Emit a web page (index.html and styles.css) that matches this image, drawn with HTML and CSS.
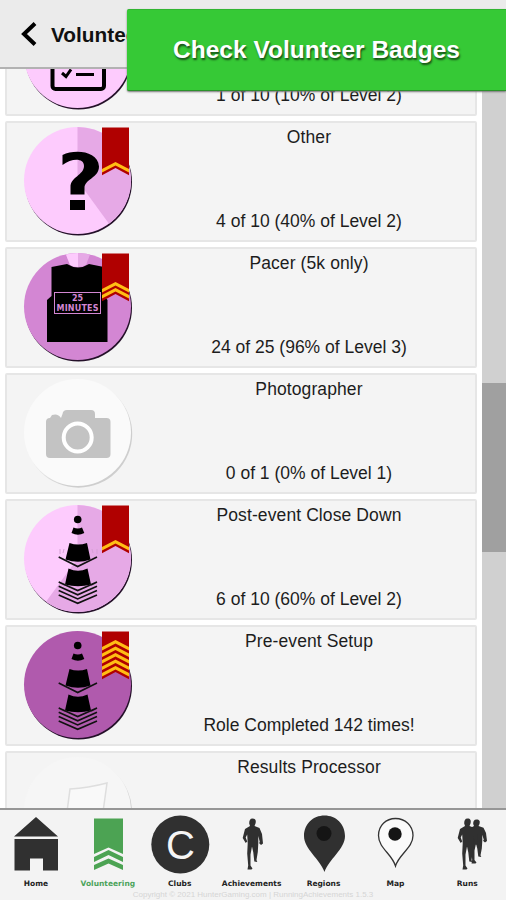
FILE: index.html
```html
<!DOCTYPE html>
<html lang="en">
<head>
<meta charset="utf-8">
<title>Volunteering</title>
<link rel="stylesheet" href="styles.css">
</head>
<body>
<svg class="defs" aria-hidden="true">
  <defs>
    <g id="cones">
      <circle cx="77.7" cy="19.5" r="3.8"/>
      <path d="M73.500 27.500Q78 29.500 82 27.500L84.300 33Q78 36.500 71.500 33Z"/>
      <path d="M69.500 43Q78 46 87 43L90.500 59.500Q78 64 65.500 59.500ZM68.500 68.500Q78 73 87.500 68.500L91 84.500Q78 88 65 84.500Z"/>
      <path class="line" d="M58.700 57L77.700 66.500 97 57M58.700 82L65 85M91 85L97 82M58.700 82L77.700 90.500 97 82M58.700 86.300L77.700 94.800 97 86.300M58.700 90.600L77.700 99 97 90.600M58.700 95L77.700 103.300 97 95"/>
    </g>
    <path id="ribbon" d="M102 5.500H129V53.200L115.500 46 102 53.200Z"/>
    <path id="stripe" d="M102 47L115.500 40 129 47V50.600L115.500 43.600 102 50.600Z"/>
    <path id="runner" d="M10.500 0c3 0 3.800 2 3 5l-1 2.500 5 2 2.500 6 1 9.500-2 1.500-2-2 .8-1-1.500-6v7l-.5 9-1.300 8 .8 2-3-.5-1-9-1.300-6-1.500 8 0 11 2 3-1 1-4 0 .7-4-1-12 .5-10-.5-9-1.500 3 1.500 4-1.500 1.500-3-5 2.300-9 5-3-.8-2.500c0-3 .8-5 3.300-5Z"/>
  </defs>
</svg>
<div class="app">
  <header class="header">
    <svg class="back" viewBox="0 0 18 26"><path d="M15 2.500L4 13 15 23.500"/></svg>
    <h1>Volunteering</h1>
  </header>
  <div class="toast">Check Volunteer Badges</div>
  <main class="content">
    <section class="list">
      <article class="card">
        <svg class="badge" viewBox="7 1 136 118"><circle class="shade" cx="78.500" cy="60" r="53.500"/><circle class="pink" cx="77.500" cy="58.500" r="53.500"/><rect class="outline" x="52.500" y="30" width="51.500" height="63" rx="3"/><path class="check" d="M62 77l4 3.500 5-7M76 78.500H94"/></svg>
        <div class="text"><h2></h2><p>1 of 10 (10% of Level 2)</p></div>
      </article>
      <article class="card">
        <svg class="badge" viewBox="7 1 136 118"><circle class="shade" cx="78.500" cy="60" r="53.500"/><circle class="pink" cx="77.500" cy="58.500" r="53.500"/><path class="orchid" d="M77.500 58.500V5A53.500 53.500 0 0 1 109 101.800Z"/><use href="#ribbon" class="red"/><use href="#stripe" class="gold"/><path d="M62.500 33C75 27 98 29 99 44.500C99 56 84.500 57 84.500 66V72.500H70.500V65C70.500 55 84 53 84 44C84 36 72 36 62.500 43ZM70 78H85V88H70Z"/></svg>
        <div class="text"><h2>Other</h2><p>4 of 10 (40% of Level 2)</p></div>
      </article>
      <article class="card">
        <svg class="badge" viewBox="7 1 136 118"><circle class="shade" cx="78.500" cy="60" r="53.500"/><circle class="mauve" cx="77.500" cy="58.500" r="53.500"/><path class="orchid" d="M66 6.500Q78 3.500 90 6.500L86 17Q78 21 70 17Z"/><path class="pink" d="M66 6.500Q72 5 78 5V19Q73 19 70 17Z"/><path d="M51.500 19L67 16Q78 23 89 16L104 19V48L107.500 52V94H47V52L51.500 48Z"/><rect class="plate" x="54.500" y="44.500" width="46" height="21"/><text class="bib" x="77.500" y="53">25</text><text class="bib" x="77.500" y="62.500" textLength="42">MINUTES</text><use href="#ribbon" class="red"/><use href="#stripe" class="gold"/><use href="#stripe" class="gold" y="-6"/></svg>
        <div class="text"><h2>Pacer (5k only)</h2><p>24 of 25 (96% of Level 3)</p></div>
      </article>
      <article class="card">
        <svg class="badge" viewBox="7 1 136 118"><defs><linearGradient id="fade" x1="0" y1="0" x2="1" y2="1"><stop offset=".35" stop-color="#f6f6f6"/><stop offset=".7" stop-color="#cecece"/></linearGradient></defs><circle fill="url(#fade)" cx="78.500" cy="60" r="53.700"/><circle class="pale" cx="77.500" cy="58.500" r="53.500"/><path class="gray" d="M50 44Q46 44 46 48V80Q46 84 50 84H106.500Q110.500 84 110.500 80V48Q110.500 44 106.500 44H95V40Q95 36 91 36H67Q63 36 62.500 40L61 44Q58 39 52 41Z"/><circle class="lens" cx="77.700" cy="63.500" r="14"/></svg>
        <div class="text"><h2>Photographer</h2><p>0 of 1 (0% of Level 1)</p></div>
      </article>
      <article class="card">
        <svg class="badge" viewBox="7 1 136 118"><circle class="shade" cx="78.500" cy="60" r="53.500"/><circle class="pink" cx="77.500" cy="58.500" r="53.500"/><path class="orchid" d="M77.500 58.500V5A53.500 53.500 0 1 1 46 101.800Z"/><path class="haze" d="M60 49v5m4-5-1 4m29-4 1 4m4-4v5"/><use href="#ribbon" class="red"/><use href="#stripe" class="gold"/><use href="#cones"/></svg>
        <div class="text"><h2>Post-event Close Down</h2><p>6 of 10 (60% of Level 2)</p></div>
      </article>
      <article class="card">
        <svg class="badge" viewBox="7 1 136 118"><circle class="shade" cx="78.500" cy="60" r="53.500"/><circle class="purple" cx="77.500" cy="58.500" r="53.500"/><use href="#ribbon" class="red"/><g class="gold"><use href="#stripe"/><use href="#stripe" y="-6.500"/><use href="#stripe" y="-13"/><use href="#stripe" y="-19.500"/><use href="#stripe" y="-26"/></g><use href="#cones"/></svg>
        <div class="text"><h2>Pre-event Setup</h2><p>Role Completed 142 times!</p></div>
      </article>
      <article class="card">
        <svg class="badge" viewBox="7 1 136 118"><circle fill="url(#fade)" cx="78.500" cy="60" r="53.500"/><circle class="faint" cx="77.500" cy="58.500" r="53.500"/><path class="paper" d="M67 60L70 37Q88 36 107 31L103 60"/></svg>
        <div class="text"><h2>Results Processor</h2></div>
      </article>
    </section>
    <aside class="track"><div class="thumb"></div></aside>
  </main>
  <footer class="footer">
    <nav class="tabs">
      <a class="tab"><svg viewBox="0 0 72 66"><path d="M36 7L58 26.500H14ZM14.500 29H58V60.500H43V48.500H30V60.500H14.500Z"/></svg><span>Home</span></a>
      <a class="tab active"><svg viewBox="0 0 72 66"><path d="M22 8.500H51V44L36.500 37.500 22 44ZM22 47L36.500 40 51 47V52L36.500 45 22 52ZM22 55L36.500 48.500 51 55V60L36.500 53.500 22 60Z"/></svg><span>Volunteering</span></a>
      <a class="tab"><svg viewBox="0 0 72 66"><circle cx="36.300" cy="34.500" r="29"/><text class="letter" x="36.500" y="49">C</text></svg><span>Clubs</span></a>
      <a class="tab"><svg viewBox="0 0 72 66"><use href="#runner" x="26" y="8.500"/></svg><span>Achievements</span></a>
      <a class="tab"><svg viewBox="0 0 72 66"><path d="M36.500 62C32 49 16 39 16 26C16 14 25 5.500 36.500 5.500S57 14 57 26C57 39 41 49 36.500 62Z"/><circle class="dot" cx="36" cy="23.500" r="7.500"/></svg><span>Regions</span></a>
      <a class="tab"><svg viewBox="0 0 72 66"><path class="pin" d="M36.500 56C33 44 19.500 38 19.500 25.500C19.500 15.500 27 8.500 36.500 8.500S54 15.500 54 25.500C54 38 40 44 36.500 56Z"/><circle class="dot" cx="36" cy="24" r="6.700"/></svg><span>Map</span></a>
      <a class="tab"><svg viewBox="0 0 72 66"><use href="#runner" x="35" y="10" transform="matrix(1 0 0 .86 0 1)"/><use href="#runner" x="26" y="8.500"/></svg><span>Runs</span></a>
    </nav>
    <small>Copyright © 2021 HunterGaming.com | RunningAchievements 1.5.3</small>
  </footer>
</div>
</body>
</html>
```
FILE: styles.css
```css
* { box-sizing: border-box; }
body { margin: 0; font-family: "Liberation Sans", Arial, sans-serif; color: #1d1d1d; background: #fff; }
.defs { display: block; width: 0; height: 0; }
.app { position: relative; display: flex; flex-direction: column; height: 900px; overflow: hidden; }
.header { display: flex; align-items: center; flex: none; height: 69px; padding-left: 20px; background: #ebebeb; border-bottom: 2px solid #b2b2b2; }
.back { width: 18px; height: 26px; margin-right: 13px; }
.back path { fill: none; stroke: #000; stroke-width: 4; }
h1 { margin: 0; padding-top: 2px; font-size: 20.8px; line-height: 24px; color: #111; }
.toast { position: absolute; z-index: 2; left: 127px; top: 9px; width: 379px; height: 82px; background: #36c936; border-bottom: 1px solid #2b912b; border-top: 1px solid #31b531; border-radius: 2px 0 0 2px; box-shadow: 0 1px 2px #777; color: #fff; font-size: 24.5px; font-weight: bold; line-height: 80px; text-align: center; text-shadow: 1px 2px 2px #174d17; }
.content { display: flex; flex: 1; min-height: 0; overflow: hidden; }
.list { display: flex; flex-direction: column; gap: 5px; width: 482px; margin-top: -74px; padding-left: 5px; }
.card { display: flex; flex: none; width: 472px; height: 121px; background: #f4f4f4; border: 2px solid #e6e6e6; border-radius: 2px; }
.badge { flex: none; width: 136px; height: 118px; }
.text { display: flex; flex: 1; flex-direction: column; justify-content: space-between; padding: 4px 0 9px; text-align: center; }
h2, p { margin: 0; font-size: 17.5px; font-weight: normal; line-height: 20px; }
h2 { letter-spacing: .1px; }
.shade { fill: #241029; }
.pink { fill: #fdcbfd; }
.orchid { fill: #e6a9e6; }
.mauve { fill: #d386d3; }
.purple { fill: #b05aad; }
.pale { fill: #fafafa; }
.faint { fill: #f6f6f6; }
.gray { fill: #c3c3c3; }
.red { fill: #b00000; }
.gold { fill: #ffbe14; }
.line { fill: none; stroke: #111; stroke-width: 1.6; }
.outline { fill: none; stroke: #000; stroke-width: 4; }
.check { fill: none; stroke: #000; stroke-width: 3; }
.plate { fill: none; stroke: #d386d3; stroke-width: 1; }
.bib { fill: #d386d3; font: bold 8px "DejaVu Sans", sans-serif; text-anchor: middle; }
.lens { fill: none; stroke: #fff; stroke-width: 4; }
.haze { fill: none; stroke: #d5a0d5; stroke-width: 1; }
.paper { fill: #f9f9f9; stroke: #dedede; stroke-width: 1.5; }
.track { width: 24px; padding-top: 314px; background: #d0d0d0; }
.thumb { height: 169px; background: #a0a0a0; }
.footer { display: flex; flex: none; flex-direction: column; height: 92px; background: #f3f3f3; border-top: 2px solid #969696; }
.tabs { display: flex; }
.tab { display: flex; flex: none; flex-direction: column; align-items: center; width: 71.9px; color: #222; fill: #303030; }
.tab svg { width: 72px; height: 66px; }
.tab span { height: 14px; padding-top: 1px; font: bold 7.5px/14px "DejaVu Sans", sans-serif; white-space: nowrap; }
.active { color: #4ca35b; fill: #4ca353; }
.letter { fill: #f5f5f5; font-size: 40px; text-anchor: middle; }
.dot { fill: #151515; }
.pin { fill: #fafafa; stroke: #333; stroke-width: 1.3; }
small { height: 8px; color: #d5d5d5; font-size: 8px; line-height: 10px; text-align: center; }
```
